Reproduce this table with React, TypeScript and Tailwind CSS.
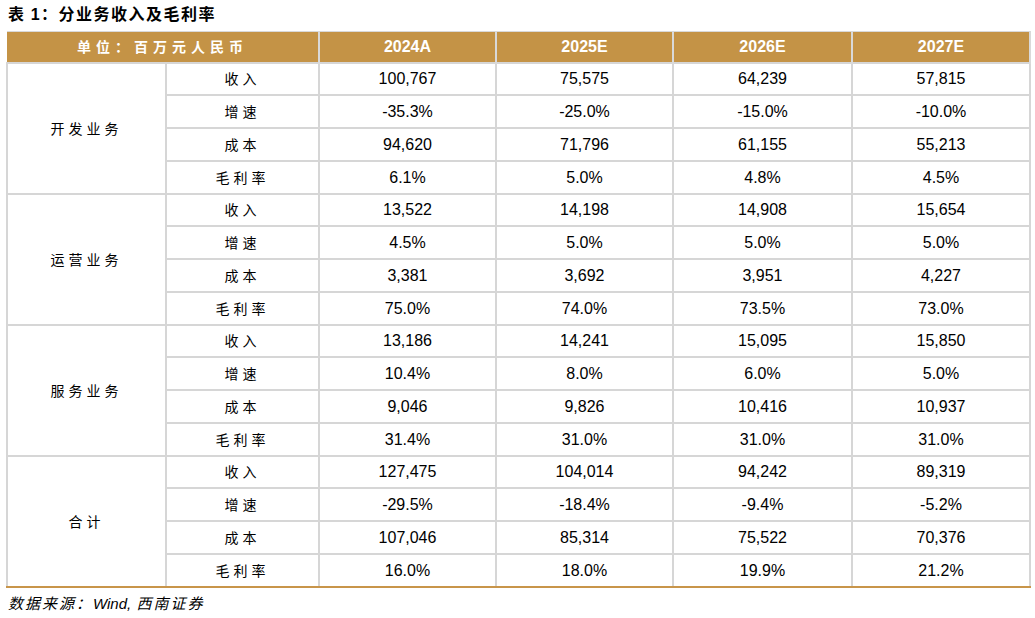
import React from 'react';

type Block = {
  name: string;
  rows: [string, string[]][];
};

const blocks: Block[] = [
  {
    name: '开发业务',
    rows: [
      ['收入', ['100,767', '75,575', '64,239', '57,815']],
      ['增速', ['-35.3%', '-25.0%', '-15.0%', '-10.0%']],
      ['成本', ['94,620', '71,796', '61,155', '55,213']],
      ['毛利率', ['6.1%', '5.0%', '4.8%', '4.5%']],
    ],
  },
  {
    name: '运营业务',
    rows: [
      ['收入', ['13,522', '14,198', '14,908', '15,654']],
      ['增速', ['4.5%', '5.0%', '5.0%', '5.0%']],
      ['成本', ['3,381', '3,692', '3,951', '4,227']],
      ['毛利率', ['75.0%', '74.0%', '73.5%', '73.0%']],
    ],
  },
  {
    name: '服务业务',
    rows: [
      ['收入', ['13,186', '14,241', '15,095', '15,850']],
      ['增速', ['10.4%', '8.0%', '6.0%', '5.0%']],
      ['成本', ['9,046', '9,826', '10,416', '10,937']],
      ['毛利率', ['31.4%', '31.0%', '31.0%', '31.0%']],
    ],
  },
  {
    name: '合计',
    rows: [
      ['收入', ['127,475', '104,014', '94,242', '89,319']],
      ['增速', ['-29.5%', '-18.4%', '-9.4%', '-5.2%']],
      ['成本', ['107,046', '85,314', '75,522', '70,376']],
      ['毛利率', ['16.0%', '18.0%', '19.9%', '21.2%']],
    ],
  },
];

const years = ['2024A', '2025E', '2026E', '2027E'];

const cjk = "font-['Noto_Sans_CJK_SC',sans-serif]";
const num = "font-['Liberation_Sans',Arial,sans-serif]";

export default function App() {
  return (
    <div className="w-[1035px] h-[618px] bg-white text-black overflow-hidden">
      <div className={`pl-[8px] pt-[3px] h-[31px] text-[16px] font-bold ${cjk} leading-[21px] tracking-[1.5px]`}>
        表 <span className={num}>1</span>：分业务收入及毛利率
      </div>
      <table className="ml-[6px] w-[1023px] border-collapse table-fixed">
        <colgroup>
          <col className="w-[159px]" />
          <col className="w-[153px]" />
          <col className="w-[177px]" />
          <col className="w-[177px]" />
          <col className="w-[179px]" />
          <col className="w-[178px]" />
        </colgroup>
        <thead>
          <tr className="h-[31px] bg-[#c49346] text-white">
            <th
              colSpan={2}
              className={`${cjk} text-[14px] font-bold tracking-[5px] border-r-2 border-[#d9d9d9] border-t border-t-[#d9d9d9]`}
            >
              单位：百万元人民币
            </th>
            {years.map((y) => (
              <th
                key={y}
                className={`${num} text-[16px] font-bold border-r-2 border-[#d9d9d9] border-t border-t-[#d9d9d9]`}
              >
                {y}
              </th>
            ))}
          </tr>
        </thead>
        <tbody>
          {blocks.map((b, bi) =>
            b.rows.map(([label, vals], i) => {
              const last = bi === blocks.length - 1 && i === 3;
              const edge = last ? 'border-b-[#c8954a]' : '';
              return (
                <tr key={b.name + label} className="h-[32.75px]">
                  {i === 0 && (
                    <td
                      rowSpan={4}
                      className={`${cjk} text-[14px] text-center tracking-[4px] border-2 border-[#d6d6d6] ${
                        bi === blocks.length - 1 ? 'border-b-[#c8954a]' : ''
                      }`}
                    >
                      {b.name}
                    </td>
                  )}
                  <td className={`${cjk} text-[14px] text-center tracking-[4px] border-2 border-[#d6d6d6] ${edge}`}>
                    {label}
                  </td>
                  {vals.map((v, j) => (
                    <td
                      key={j}
                      className={`${num} text-[16px] text-center border-2 border-[#d6d6d6] pt-[1px] ${edge}`}
                    >
                      {v}
                    </td>
                  ))}
                </tr>
              );
            })
          )}
        </tbody>
      </table>
      <div className={`pl-[8px] pt-[5px] text-[15px] italic ${cjk} tracking-[2px] leading-[20px]`}>
        数据来源：<span className={`${num} tracking-normal`}>Wind,</span> 西南证券
      </div>
    </div>
  );
}
